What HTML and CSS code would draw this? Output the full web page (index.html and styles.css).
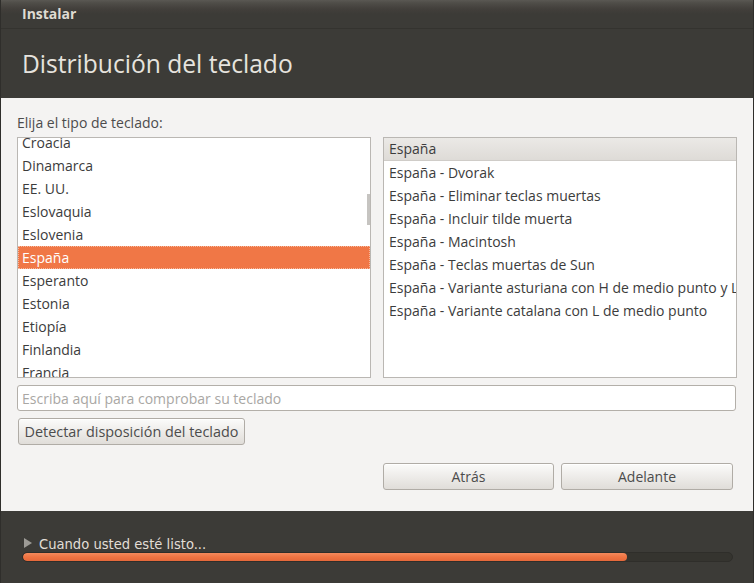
FILE: index.html
```html
<!DOCTYPE html>
<html lang="es">
<head>
<meta charset="utf-8">
<title>Instalar</title>
<link rel="stylesheet" href="styles.css">
</head>
<body>
<div class="window">
  <div class="titlebar">Instalar</div>
  <div class="header">Distribución del teclado</div>
  <div class="content">
    <div class="label">Elija el tipo de teclado:</div>
    <div class="lists">
      <div class="list list-left">
        <ul class="rows rows-scrolled">
          <li>Croacia</li>
          <li>Dinamarca</li>
          <li>EE. UU.</li>
          <li>Eslovaquia</li>
          <li>Eslovenia</li>
          <li class="selected">España</li>
          <li>Esperanto</li>
          <li>Estonia</li>
          <li>Etiopía</li>
          <li>Finlandia</li>
          <li>Francia</li>
        </ul>
        <div class="scrollbar"></div>
      </div>
      <div class="list list-right">
        <ul class="rows">
          <li class="header-row">España</li>
          <li>España - Dvorak</li>
          <li>España - Eliminar teclas muertas</li>
          <li>España - Incluir tilde muerta</li>
          <li>España - Macintosh</li>
          <li>España - Teclas muertas de Sun</li>
          <li>España - Variante asturiana con H de medio punto y L de medio punto</li>
          <li>España - Variante catalana con L de medio punto</li>
        </ul>
      </div>
    </div>
    <input class="test-input" type="text" placeholder="Escriba aquí para comprobar su teclado">
    <div class="detect-row"><button class="btn btn-detect">Detectar disposición del teclado</button></div>
    <div class="nav">
      <button class="btn btn-nav btn-back">Atrás</button>
      <button class="btn btn-nav btn-next">Adelante</button>
    </div>
  </div>
  <div class="footer">
    <div class="status"><span class="triangle"></span><span class="status-text">Cuando usted esté listo...</span></div>
    <div class="progress"><div class="progress-fill" style="width: 604px"></div></div>
  </div>
</div>
</body>
</html>
```

FILE: styles.css
```css
* { box-sizing: border-box; }

html, body {
  margin: 0;
  padding: 0;
  background: #3c3b37;
}

body {
  font-family: "Open Sans", "Noto Sans", sans-serif;
  font-size: 14px;
  color: #3c3c3c;
}

.window {
  width: 754px;
  height: 583px;
  display: flex;
  flex-direction: column;
  background: #3c3b37;
  border-left: 1px solid #2f2e2b;
  border-right: 1px solid #2f2e2b;
  overflow: hidden;
}

.titlebar {
  height: 29px;
  flex: none;
  padding-left: 21px;
  line-height: 28px;
  font-size: 14px;
  font-weight: 700;
  color: #dfdbd2;
  background: linear-gradient(#5a5853 0, #4f4d48 3px, #423f3b 9px, #3c3b37 14px);
  border-bottom: 1px solid #34332f;
}

.header {
  height: 69px;
  flex: none;
  padding: 20px 0 0 21px;
  font-size: 24.6px;
  line-height: 30px;
  font-weight: 400;
  color: #e6e3de;
}

.content {
  height: 413px;
  flex: none;
  background: #f4f3f2;
  padding: 0 16px 0 16px;
  display: flex;
  flex-direction: column;
}

.label {
  margin-top: 15px;
  height: 19px;
  line-height: 19px;
  color: #4c4c4c;
}

.lists {
  margin-top: 5px;
  display: flex;
  gap: 12px;
  height: 241px;
}

.list {
  position: relative;
  flex: 1;
  background: #fff;
  border: 1px solid #bab7b3;
  overflow: hidden;
}

.rows {
  list-style: none;
  margin: 0;
  padding: 0;
}

.rows li {
  height: 23px;
  line-height: 23px;
  padding-left: 4px;
  white-space: nowrap;
  color: #3c3c3c;
}

.rows-scrolled { margin-top: -7px; }

.rows li.selected {
  background: #f07746;
  color: #fff;
  outline: 1px dotted #f7b89d;
  outline-offset: -1px;
}

.list-right .rows li { padding-left: 5px; }

.rows li.header-row {
  height: 23px;
  background: linear-gradient(#ebe9e6, #dedbd7);
  border-bottom: 1px solid #cfccc8;
  line-height: 22px;
}

.scrollbar {
  position: absolute;
  right: 0;
  top: 56px;
  width: 3px;
  height: 31px;
  background: #c6c4c1;
}

.test-input {
  margin-top: 7px;
  width: 719px;
  height: 26px;
  border: 1px solid #b3afa9;
  border-radius: 3px;
  background: #fff;
  padding: 0 4px;
  font-family: inherit;
  font-size: 14px;
  color: #3c3c3c;
  outline: none;
}

.test-input::placeholder { color: #a9a7a4; }

.detect-row {
  margin-top: 7px;
  display: flex;
  padding-left: 1px;
}

.btn {
  height: 27px;
  border: 1px solid #b0aca6;
  border-radius: 3px;
  background: linear-gradient(#fbfbfa, #ebe9e6 60%, #e0ddd9);
  font-family: inherit;
  font-size: 14px;
  color: #4c4c4c;
  padding: 0 5px;
  box-shadow: inset 0 1px 0 #fff;
}

.btn-detect { width: 227px; font-size: 14.4px; }

.nav {
  margin-top: 18px;
  display: flex;
  justify-content: flex-end;
  gap: 7px;
  padding-right: 4px;
}

.btn-back { width: 171px; }
.btn-next { width: 172px; }

.footer {
  flex: 1;
  padding: 23px 0 0 21px;
}

.status {
  display: flex;
  align-items: center;
  height: 18px;
}

.triangle {
  width: 0;
  height: 0;
  margin: 0 7px 0 2px;
  border-top: 5px solid transparent;
  border-bottom: 5px solid transparent;
  border-left: 8px solid #9d9b96;
}

.status-text {
  font-family: "Liberation Sans Narrow", "DejaVu Sans Condensed", sans-serif;
  font-size: 14.6px;
  color: #e2ded6;
}

.progress {
  width: 711px;
  height: 10px;
  border-radius: 5px;
  background: #35342f;
  border: 1px solid #2f2e2a;
  overflow: hidden;
}

.progress-fill {
  height: 100%;
  border-radius: 4px;
  background: linear-gradient(#f58a5c, #ef7442 50%, #e5683a);
}
```
